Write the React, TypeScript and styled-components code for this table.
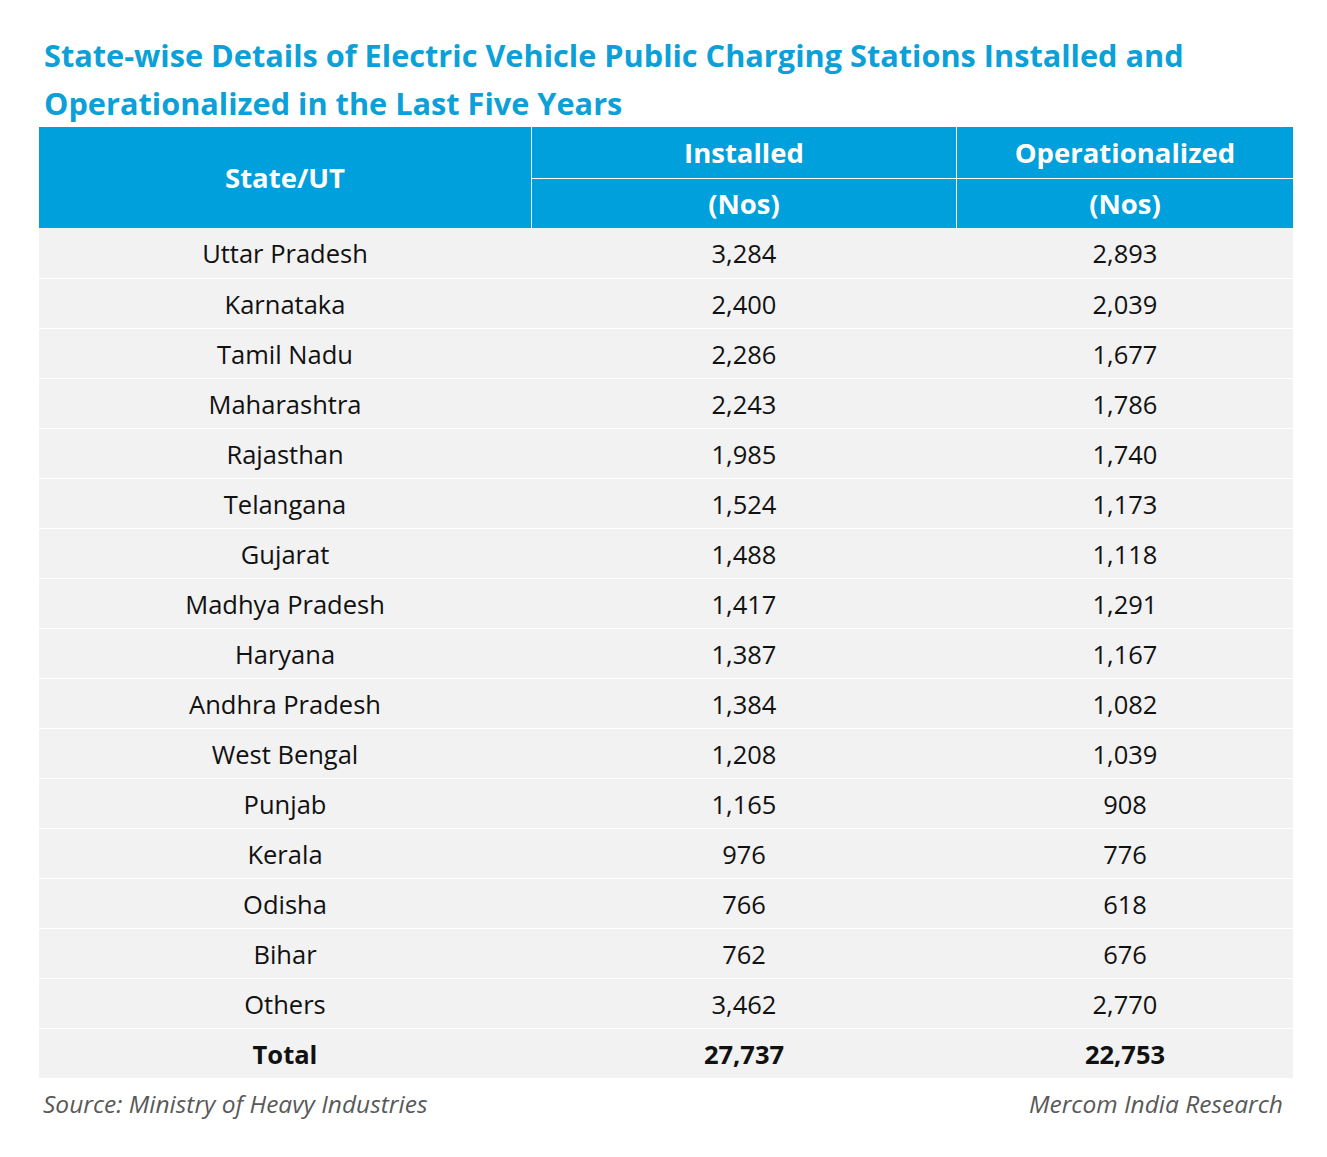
import styled, { createGlobalStyle } from "styled-components";

const colors = {
  blue: "#00a0dc",
  title: "#0ca0d8",
  row: "#f2f2f2",
  text: "#111111",
  muted: "#595959",
  white: "#ffffff",
};

const rows: [string, string, string][] = [
  ["Uttar Pradesh", "3,284", "2,893"],
  ["Karnataka", "2,400", "2,039"],
  ["Tamil Nadu", "2,286", "1,677"],
  ["Maharashtra", "2,243", "1,786"],
  ["Rajasthan", "1,985", "1,740"],
  ["Telangana", "1,524", "1,173"],
  ["Gujarat", "1,488", "1,118"],
  ["Madhya Pradesh", "1,417", "1,291"],
  ["Haryana", "1,387", "1,167"],
  ["Andhra Pradesh", "1,384", "1,082"],
  ["West Bengal", "1,208", "1,039"],
  ["Punjab", "1,165", "908"],
  ["Kerala", "976", "776"],
  ["Odisha", "766", "618"],
  ["Bihar", "762", "676"],
  ["Others", "3,462", "2,770"],
];

const columns = "492px 424px 336px";

const GlobalStyle = createGlobalStyle`
  body {
    margin: 0;
    background: ${colors.white};
    font-family: "Open Sans", "Noto Sans", sans-serif;
  }
`;

const Page = styled.div`
  width: 1327px;
  padding: 31px 0 0 39px;
  box-sizing: border-box;
`;

const Title = styled.h1`
  margin: 0 0 0 5px;
  font-size: 30.7px;
  line-height: 48px;
  font-weight: 700;
  color: ${colors.title};
`;

const Header = styled.div`
  display: grid;
  grid-template-columns: ${columns};
  grid-template-rows: 51px 49px;
  gap: 1px;
  width: 1254px;
  background: ${colors.white};
`;

const HeadCell = styled.div<{ $span?: boolean }>`
  display: flex;
  align-items: center;
  justify-content: center;
  background: ${colors.blue};
  color: ${colors.white};
  font-size: 27.5px;
  font-weight: 700;
  grid-row: ${(p) => (p.$span ? "1 / span 2" : "auto")};
`;

const Body = styled.div`
  display: flex;
  flex-direction: column;
  gap: 1px;
  width: 1254px;
  background: ${colors.white};
`;

const Row = styled.div`
  display: grid;
  grid-template-columns: ${columns};
  column-gap: 1px;
  height: 49px;
  background: ${colors.row};
  &:first-child {
    height: 50px;
  }
`;

const Cell = styled.div<{ $bold?: boolean }>`
  display: flex;
  align-items: center;
  justify-content: center;
  font-size: 25.5px;
  color: ${colors.text};
  font-weight: ${(p) => (p.$bold ? 700 : 400)};
`;

const Footer = styled.div`
  display: flex;
  justify-content: space-between;
  width: 1254px;
  padding: 9px 10px 0 4px;
  box-sizing: border-box;
  font-size: 24.5px;
  font-style: italic;
  color: ${colors.muted};
`;

export default function App() {
  return (
    <>
      <GlobalStyle />
      <Page>
        <Title>
          State-wise Details of Electric Vehicle Public Charging Stations Installed and
          <br />
          Operationalized in the Last Five Years
        </Title>
        <Header>
          <HeadCell $span>State/UT</HeadCell>
          <HeadCell>Installed</HeadCell>
          <HeadCell>Operationalized</HeadCell>
          <HeadCell>(Nos)</HeadCell>
          <HeadCell>(Nos)</HeadCell>
        </Header>
        <Body>
          {rows.map(([state, installed, operational]) => (
            <Row key={state}>
              <Cell>{state}</Cell>
              <Cell>{installed}</Cell>
              <Cell>{operational}</Cell>
            </Row>
          ))}
          <Row>
            <Cell $bold>Total</Cell>
            <Cell $bold>27,737</Cell>
            <Cell $bold>22,753</Cell>
          </Row>
        </Body>
        <Footer>
          <span>Source: Ministry of Heavy Industries</span>
          <span>Mercom India Research</span>
        </Footer>
      </Page>
    </>
  );
}
